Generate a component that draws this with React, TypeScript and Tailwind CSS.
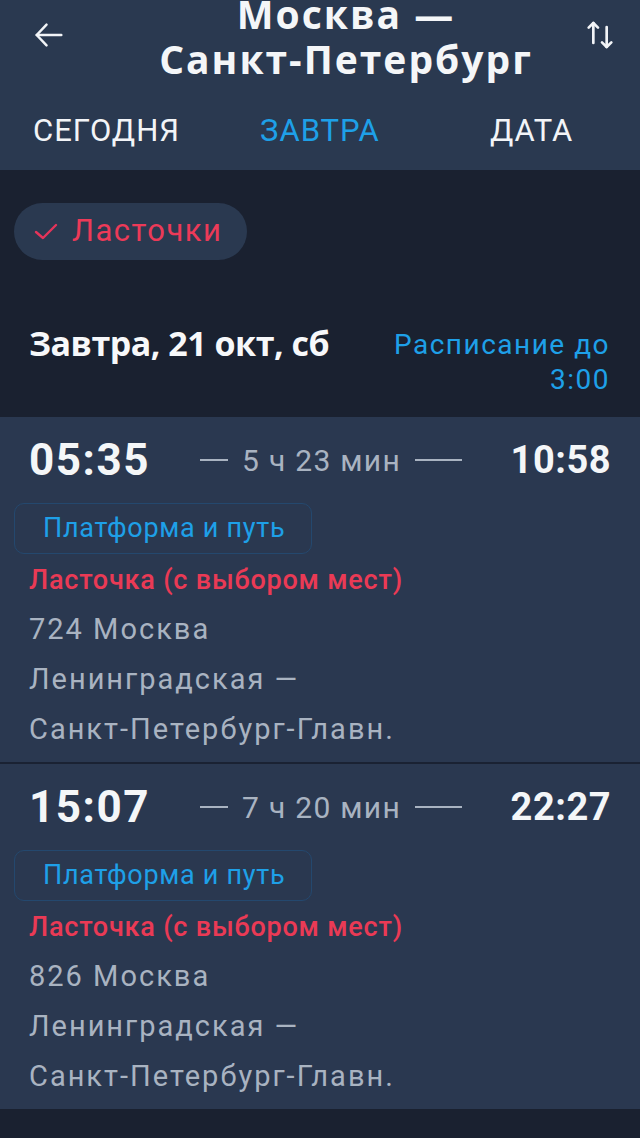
const trains = [
  { dep: '05:35', dur: '5 ч 23 мин', arr: '10:58', num: '724' },
  { dep: '15:07', dur: '7 ч 20 мин', arr: '22:27', num: '826' },
];

function ArrowLeft() {
  return (
    <svg width="32" height="30" viewBox="0 0 26 24" fill="none" stroke="#f2f4f7" strokeWidth="2" strokeLinecap="round" strokeLinejoin="round">
      <path d="M23 12H3" />
      <path d="M11 3.5L3 12l8 8.5" />
    </svg>
  );
}

function SwapIcon() {
  return (
    <svg width="34" height="32" viewBox="0 0 24 24" fill="none" stroke="#f2f4f7" strokeWidth="2" strokeLinecap="round" strokeLinejoin="round">
      <path d="M7 18V3" />
      <path d="M3.5 6.5L7 3l3.5 3.5" />
      <path d="M17 6v15" />
      <path d="M13.5 17.5L17 21l3.5-3.5" />
    </svg>
  );
}

function TrainCard({ dep, dur, arr, num }: { dep: string; dur: string; arr: string; num: string }) {
  return (
    <div className="bg-[#2a3850] pt-[16px] pb-[8px]">
      {/* Times */}
      <div className="flex items-center px-[29px] h-[54px]">
        <span className="text-[44px] font-bold text-[#f4f6f8] tracking-[1.5px] w-[171px]">{dep}</span>
        <span className="flex-1 flex items-center text-[30px] tracking-[1.3px] text-[#a9b3c1]">
          <span className="w-[28px] h-[2px] bg-[#a9b3c1] mr-[14px]"></span>
          {dur}
          <span className="w-[47px] h-[2px] bg-[#a9b3c1] ml-[14px]"></span>
        </span>
        <span className="text-[38px] font-bold text-[#f4f6f8] tracking-[0.5px]">{arr}</span>
      </div>

      {/* Platform button */}
      <div className="px-[14px] mt-[16px]">
        <div className="w-[298px] h-[51px] rounded-[10px] border border-[#24486e] flex items-center pl-[28px] text-[27px] tracking-[0.7px] text-[#1ea0e8]">
          Платформа и путь
        </div>
      </div>

      <div className="px-[29px] mt-[2px] text-[27px] tracking-[0.8px] font-medium text-[#ea3a55] leading-[48px]">
        Ласточка (с выбором мест)
      </div>
      <div className="px-[29px] text-[29px] tracking-[2px] text-[#a9b3c1] leading-[50px]">
        <div>{num} Москва</div>
        <div>Ленинградская —</div>
        <div>Санкт-Петербург-Главн.</div>
      </div>
    </div>
  );
}

export default function App() {
  return (
    <div className="w-[640px] h-[1138px] overflow-hidden bg-[#1a2130] font-['Roboto',sans-serif]">
      {/* Header */}
      <div className="bg-[#2a3950] h-[170px]">
        <div className="flex items-start justify-between pl-[33px] pr-[23px]">
          <div className="pt-[20px]"><ArrowLeft /></div>
          <div className="pl-[44px] text-center text-[39px] font-bold text-[#f4f6f8] leading-[45px] mt-[-9px] font-['Open_Sans',sans-serif] tracking-[2px]">
            <div>Москва —</div>
            <div>Санкт-Петербург</div>
          </div>
          <div className="pt-[19px]"><SwapIcon /></div>
        </div>
        <div className="flex items-center mt-[32px] text-[31px] tracking-[1px] leading-[36px]">
          <span className="pl-[33px] w-[260px] text-[#f2f4f7]">СЕГОДНЯ</span>
          <span className="w-[230px] text-[#1ea0e8]">ЗАВТРА</span>
          <span className="text-[#f2f4f7]">ДАТА</span>
        </div>
      </div>

      {/* Filter chip */}
      <div className="px-[14px] pt-[33px]">
        <div className="inline-flex items-center h-[57px] rounded-full bg-[#2a3950] pl-[20px] pr-[24px] gap-[14px]">
          <svg width="24" height="20" viewBox="0 0 24 20" fill="none" stroke="#e4345a" strokeWidth="2.4" strokeLinecap="round" strokeLinejoin="round">
            <path d="M2 10l7 6L22 3" />
          </svg>
          <span className="text-[31px] tracking-[1.5px] text-[#ec3a58]">Ласточки</span>
        </div>
      </div>

      {/* Date row */}
      <div className="flex items-start justify-between pl-[29px] pr-[30px] pt-[60px] pb-[20px]">
        <span className="text-[34px] font-bold text-[#f7f8fa] font-['Open_Sans',sans-serif] tracking-[-0.5px] leading-[46px]">
          Завтра, 21 окт, сб
        </span>
        <span className="text-[28px] tracking-[1.5px] text-[#1ea0e8] text-right leading-[35px] w-[230px] mt-[7px]">
          Расписание до 3:00
        </span>
      </div>

      {/* Trains */}
      <div className="flex flex-col gap-[2px] bg-[#1a2233]">
        {trains.map((t) => (
          <TrainCard key={t.num} {...t} />
        ))}
      </div>
    </div>
  );
}
